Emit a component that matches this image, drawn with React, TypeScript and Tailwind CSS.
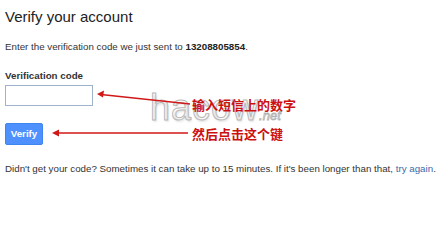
export default function App() {
  return (
    <div className="relative w-[448px] h-[230px] bg-white overflow-hidden font-['Liberation_Sans',Arial,sans-serif] text-[#222]">
      <div className="flex flex-col px-[5px] pt-[8px]">
        <h1 className="text-[15px] leading-[18px] text-[#222]">Verify your account</h1>
        <p className="mt-[15px] text-[9.75px] leading-[12px] text-[#333]">
          Enter the verification code we just sent to <b className="text-[#222]">13208805854</b>.
        </p>
        <label className="mt-[17px] text-[9.75px] leading-[12px] font-bold text-[#333]">Verification code</label>
        <input className="mt-[3px] w-[88px] h-[21px] border border-[#9fb2cc] bg-white outline-none" />
        <button className="mt-[17px] w-[38px] h-[22px] rounded-[2px] bg-[#4d90fe] border border-[#3f85f0] text-white text-[9.75px] font-bold flex items-center justify-center">
          Verify
        </button>
        <p className="mt-[18px] text-[9.75px] leading-[12px] text-[#333] whitespace-nowrap">
          Didn't get your code? Sometimes it can take up to 15 minutes. If it's been longer than that,{" "}
          <span className="text-[#3b6aa8]">try again</span>.
        </p>
      </div>

      {/* watermark */}
      <div className="absolute left-[150px] top-[90px] flex items-end select-none">
        <span className="text-[36px] leading-[36px] tracking-[1px] text-transparent [-webkit-text-stroke:1px_#b8b8b8] [text-shadow:1px_2px_2px_rgba(0,0,0,0.1)]">hacow</span>
        <span className="mb-[4px] text-[13px] leading-[13px] italic text-transparent [-webkit-text-stroke:0.8px_#b0b0b0]">.net</span>
      </div>

      {/* annotation arrows */}
      <svg className="absolute left-0 top-0" width="448" height="230" viewBox="0 0 448 230">
        <line x1="101" y1="94.5" x2="190" y2="104" stroke="#d01818" strokeWidth="1.4" />
        <path d="M97 94 L104 90.5 L103 97.5 Z" fill="#d01818" />
        <line x1="56" y1="133" x2="188" y2="133" stroke="#d01818" strokeWidth="1.4" />
        <path d="M52 133 L59 129.5 L59 136.5 Z" fill="#d01818" />
      </svg>

      <div className="absolute left-[192px] top-[97px] text-[13px] leading-[16px] font-bold text-[#cc1010] font-['Noto_Sans_CJK_SC',sans-serif]">
        输入短信上的数字
      </div>
      <div className="absolute left-[192px] top-[126px] text-[13px] leading-[16px] font-bold text-[#cc1010] font-['Noto_Sans_CJK_SC',sans-serif]">
        然后点击这个键
      </div>
    </div>
  );
}
